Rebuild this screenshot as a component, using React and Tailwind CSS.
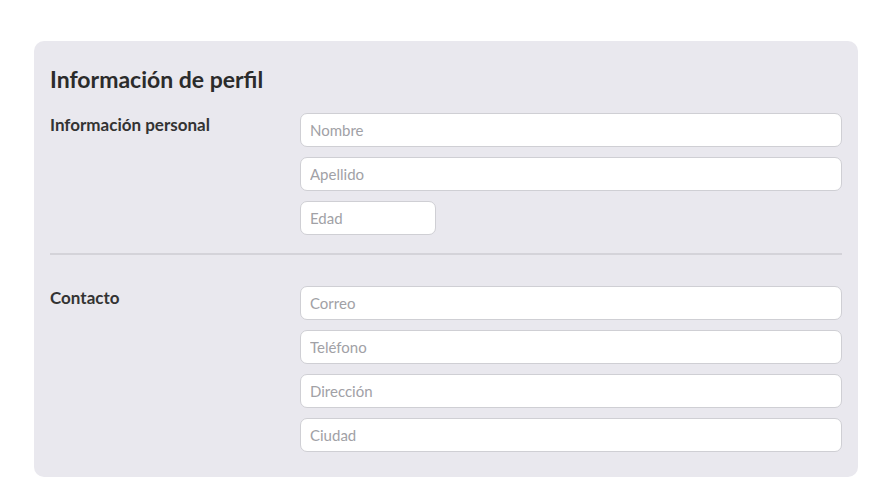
import React from "react";

const Field = ({ placeholder, className = "w-full" }) => (
  <input
    type="text"
    placeholder={placeholder}
    className={`${className} h-[34px] rounded-[7px] border border-[#cfcfd4] bg-white px-[9px] text-[15px] text-[#333] placeholder:text-[#a1a1a6] outline-none`}
  />
);

const Section = ({ title, children }) => (
  <div className="flex">
    <div className="w-[250px] shrink-0 text-[17px] leading-[24px] font-bold text-[#333]">{title}</div>
    <div className="flex flex-1 flex-col gap-[10px]">{children}</div>
  </div>
);

export default function App() {
  return (
    <div className="min-h-[501px] bg-white px-[34px] pt-[41px] font-['Lato',sans-serif]">
      <div className="w-[824px] rounded-[10px] bg-[#e9e8ee] px-4 pt-[22px] pb-[25px]">
        <h2 className="mb-[18px] text-[23px] leading-[32px] font-bold text-[#2b2b2b]">
          Información de perfil
        </h2>
        <Section title="Información personal">
          <Field placeholder="Nombre" />
          <Field placeholder="Apellido" />
          <Field placeholder="Edad" className="w-[136px]" />
        </Section>
        <hr className="mt-[18px] mb-[31px] border-t-2 border-[#d4d3d9]" />
        <Section title="Contacto">
          <Field placeholder="Correo" />
          <Field placeholder="Teléfono" />
          <Field placeholder="Dirección" />
          <Field placeholder="Ciudad" />
        </Section>
      </div>
    </div>
  );
}
